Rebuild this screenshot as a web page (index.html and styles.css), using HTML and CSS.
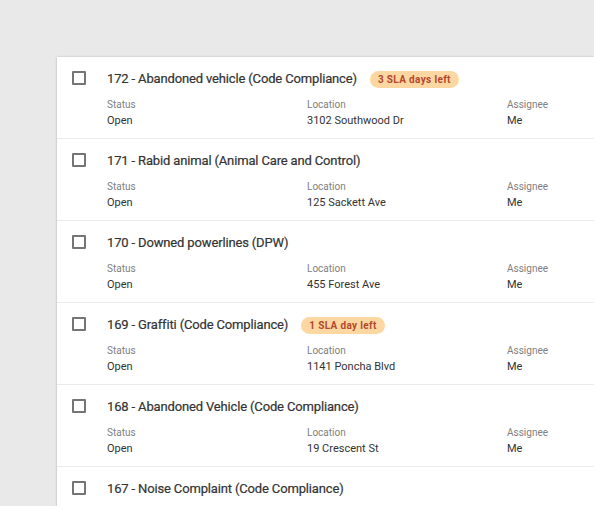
FILE: index.html
```html
<!DOCTYPE html>
<html>
<head>
<meta charset="utf-8">
<link rel="stylesheet" href="styles.css">
</head>
<body>
<div class="card">
  <div class="row">
    <span class="checkbox"></span>
    <div class="content">
      <div class="title-line"><span class="title">172 - Abandoned vehicle (Code Compliance)</span><span class="badge">3 SLA days left</span></div>
      <div class="meta">
        <div class="field"><div class="label">Status</div><div class="value">Open</div></div>
        <div class="field"><div class="label">Location</div><div class="value">3102 Southwood Dr</div></div>
        <div class="field"><div class="label">Assignee</div><div class="value">Me</div></div>
      </div>
    </div>
  </div>
  <div class="row">
    <span class="checkbox"></span>
    <div class="content">
      <div class="title-line"><span class="title">171 - Rabid animal (Animal Care and Control)</span></div>
      <div class="meta">
        <div class="field"><div class="label">Status</div><div class="value">Open</div></div>
        <div class="field"><div class="label">Location</div><div class="value">125 Sackett Ave</div></div>
        <div class="field"><div class="label">Assignee</div><div class="value">Me</div></div>
      </div>
    </div>
  </div>
  <div class="row">
    <span class="checkbox"></span>
    <div class="content">
      <div class="title-line"><span class="title">170 - Downed powerlines (DPW)</span></div>
      <div class="meta">
        <div class="field"><div class="label">Status</div><div class="value">Open</div></div>
        <div class="field"><div class="label">Location</div><div class="value">455 Forest Ave</div></div>
        <div class="field"><div class="label">Assignee</div><div class="value">Me</div></div>
      </div>
    </div>
  </div>
  <div class="row">
    <span class="checkbox"></span>
    <div class="content">
      <div class="title-line"><span class="title">169 - Graffiti (Code Compliance)</span><span class="badge">1 SLA day left</span></div>
      <div class="meta">
        <div class="field"><div class="label">Status</div><div class="value">Open</div></div>
        <div class="field"><div class="label">Location</div><div class="value">1141 Poncha Blvd</div></div>
        <div class="field"><div class="label">Assignee</div><div class="value">Me</div></div>
      </div>
    </div>
  </div>
  <div class="row">
    <span class="checkbox"></span>
    <div class="content">
      <div class="title-line"><span class="title">168 - Abandoned Vehicle (Code Compliance)</span></div>
      <div class="meta">
        <div class="field"><div class="label">Status</div><div class="value">Open</div></div>
        <div class="field"><div class="label">Location</div><div class="value">19 Crescent St</div></div>
        <div class="field"><div class="label">Assignee</div><div class="value">Me</div></div>
      </div>
    </div>
  </div>
  <div class="row row-last">
    <span class="checkbox"></span>
    <div class="content">
      <div class="title-line"><span class="title">167 - Noise Complaint (Code Compliance)</span></div>
    </div>
  </div>
</div>
</body>
</html>
```
FILE: styles.css
```css
html, body {
  margin: 0;
  padding: 0;
  background: #e9e9e9;
  overflow: hidden;
  height: 506px;
}
body {
  font-family: Roboto, "Liberation Sans", sans-serif;
  color: #333;
}
.card {
  margin: 57px 0 0 57px;
  width: 537px;
  background: #fff;
  box-shadow: 0 0 2px rgba(0,0,0,0.18), 0 1px 3px rgba(0,0,0,0.08);
}
.row {
  display: flex;
  align-items: flex-start;
  padding: 12px 0 9px 15px;
  border-bottom: 1px solid #ebebeb;
}
.row-last {
  border-bottom: none;
  padding-bottom: 20px;
}
.checkbox {
  box-sizing: border-box;
  width: 14px;
  height: 14px;
  margin-top: 2px;
  border: 2px solid #757575;
  border-radius: 1px;
  flex: none;
}
.content {
  margin-left: 21px;
  flex: 1;
  min-width: 0;
}
.title-line {
  display: flex;
  align-items: center;
  height: 20px;
}
.title {
  font-size: 13px;
  font-weight: 400;
  color: #333;
  line-height: 20px;
  letter-spacing: -0.15px;
  white-space: nowrap;
  -webkit-text-stroke: 0.2px #333;
}
.badge {
  margin-left: 13px;
  height: 17px;
  line-height: 17px;
  padding: 0 8px;
  border-radius: 9px;
  background: #fdd7a2;
  color: #b4472c;
  font-size: 10px;
  font-weight: 700;
  letter-spacing: 0.35px;
  white-space: nowrap;
}
.meta {
  display: grid;
  grid-template-columns: 200px 200px 1fr;
  margin-top: 8px;
}
.label {
  font-size: 10px;
  line-height: 16px;
  color: #808080;
}
.value {
  font-size: 11px;
  line-height: 16px;
  color: #333;
}
```
